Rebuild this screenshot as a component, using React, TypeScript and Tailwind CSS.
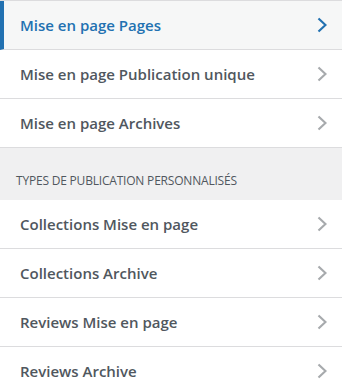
import React from 'react';

interface Item {
  label: string;
  active?: boolean;
}

const top: Item[] = [
  { label: 'Mise en page Pages', active: true },
  { label: 'Mise en page Publication unique' },
  { label: 'Mise en page Archives' },
];

const custom: Item[] = [
  { label: 'Collections Mise en page' },
  { label: 'Collections Archive' },
  { label: 'Reviews Mise en page' },
  { label: 'Reviews Archive' },
];

const Chevron: React.FC<{ active?: boolean }> = ({ active }) => (
  <svg width="10" height="16" viewBox="0 0 10 16" className={active ? 'text-[#2271b1]' : 'text-[#a7aaad]'}>
    <polyline points="1.5,1.5 8.5,8 1.5,14.5" fill="none" stroke="currentColor" strokeWidth="2.2" />
  </svg>
);

const Row: React.FC<{ item: Item }> = ({ item }) => (
  <div
    className={`flex items-center justify-between h-[49px] border-b border-[#dcdcde] pr-[15px] ${
      item.active ? 'bg-[#f6f7f7] border-l-4 border-l-[#2271b1] pl-4 text-[#2271b1]' : 'bg-white pl-5 text-[#50575e]'
    }`}
  >
    <span className="text-[15px] font-semibold leading-none">{item.label}</span>
    <Chevron active={item.active} />
  </div>
);

export default function App() {
  return (
    <div className="w-[342px] h-[390px] overflow-hidden bg-white border-t border-[#dcdcde]" style={{ fontFamily: '"Open Sans", "Noto Sans", sans-serif' }}>
      {top.map((i) => (
        <Row key={i.label} item={i} />
      ))}
      <div className="h-[52px] bg-[#f0f0f1] flex items-end pl-4 pb-[13px]">
        <span className="text-[12px] text-[#50575e] uppercase leading-none tracking-[-0.2px]">
          Types de publication personnalisés
        </span>
      </div>
      {custom.map((i) => (
        <Row key={i.label} item={i} />
      ))}
    </div>
  );
}
